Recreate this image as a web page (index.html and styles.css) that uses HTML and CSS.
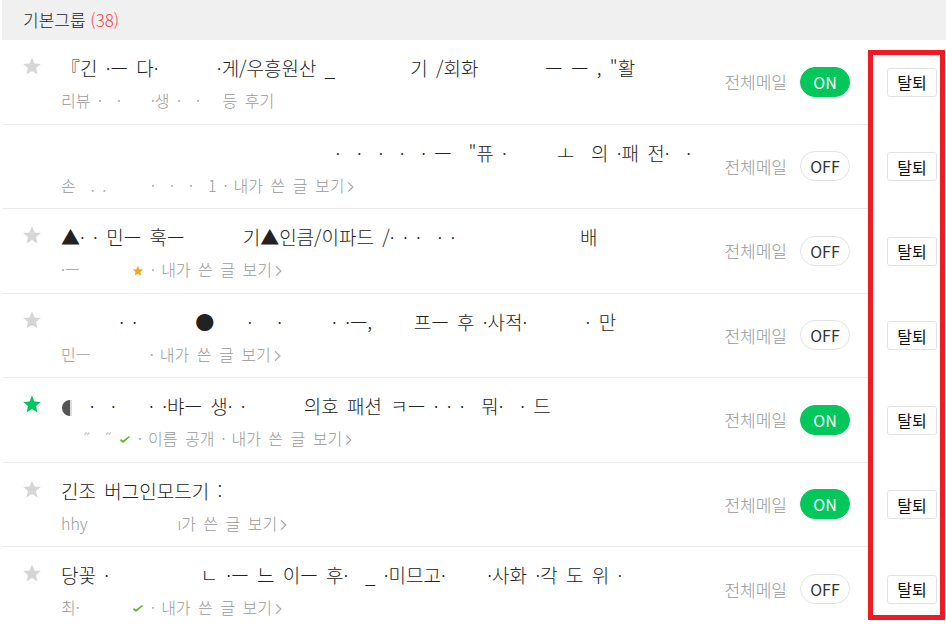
FILE: index.html
```html
<!DOCTYPE html>
<html lang="ko">

<head>
 <meta charset="UTF-8">
 <meta name="viewport" content="width=device-width, initial-scale=1.0">
 <title>가입 카페 관리</title>
 <link rel="stylesheet" href="styles.css">
</head>

<body>

 <section class="group">
  <h2 class="group-head">기본그룹 <em>(38)</em></h2>

  <ul class="cafe-list">
   <li class="cafe">
    <div class="cafe-main">
     <span class="fav"><svg viewBox="0 0 20 20"><path d="M10 1.5l2.5 5.9 6.4.5-4.9 4.2 1.5 6.3L10 15l-5.5 3.4 1.5-6.3-4.9-4.2 6.4-.5z"/></svg></span>
     <div class="cafe-info">
      <p class="cafe-name">『긴 ·ㅡ 다·       ·게/우흥원산 _         기 /회화        ㅡ ㅡ , "활</p>
      <p class="cafe-meta">리뷰 ·  ·    ·생 ·  ·   등 후기</p>
     </div>
     <span class="mail-label">전체메일</span>
     <button class="mail-toggle on">ON</button>
    </div>
    <div class="cafe-action"><button class="leave">탈퇴</button></div>
   </li>

   <li class="cafe">
    <div class="cafe-main">
     <span class="fav"></span>
     <div class="cafe-info">
      <p class="cafe-name">                                 ·  ·  ·  ·  · ㅡ  "퓨 ·      ㅗ  의 ·패 전·  ·</p>
      <p class="cafe-meta">손  . .      ·  ·  ·  1<span class="sep">·</span><a class="my-posts" href="#">내가 쓴 글 보기<svg viewBox="0 0 6 10"><path d="M1 1l4 4-4 4"/></svg></a></p>
     </div>
     <span class="mail-label">전체메일</span>
     <button class="mail-toggle">OFF</button>
    </div>
    <div class="cafe-action"><button class="leave">탈퇴</button></div>
   </li>

   <li class="cafe">
    <div class="cafe-main">
     <span class="fav"><svg viewBox="0 0 20 20"><path d="M10 1.5l2.5 5.9 6.4.5-4.9 4.2 1.5 6.3L10 15l-5.5 3.4 1.5-6.3-4.9-4.2 6.4-.5z"/></svg></span>
     <div class="cafe-info">
      <p class="cafe-name">▲· · 민ㅡ 훅ㅡ       기▲인큼/이파드 /· · ·  · ·               배</p>
      <p class="cafe-meta">·ㅡ       <svg class="badge" viewBox="0 0 12 12"><path fill="#f5a623" d="M6 .8l1.5 3.4 3.7.3-2.8 2.5.9 3.6L6 8.7 2.7 10.6l.9-3.6L.8 4.5l3.7-.3z"/></svg><span class="sep">·</span><a class="my-posts" href="#">내가 쓴 글 보기<svg viewBox="0 0 6 10"><path d="M1 1l4 4-4 4"/></svg></a></p>
     </div>
     <span class="mail-label">전체메일</span>
     <button class="mail-toggle">OFF</button>
    </div>
    <div class="cafe-action"><button class="leave">탈퇴</button></div>
   </li>

   <li class="cafe">
    <div class="cafe-main">
     <span class="fav"><svg viewBox="0 0 20 20"><path d="M10 1.5l2.5 5.9 6.4.5-4.9 4.2 1.5 6.3L10 15l-5.5 3.4 1.5-6.3-4.9-4.2 6.4-.5z"/></svg></span>
     <div class="cafe-info">
      <p class="cafe-name">       · ·       ●    ·   ·      · ·ㅡ,     프ㅡ 후 ·사적·       · 만</p>
      <p class="cafe-meta">민ㅡ       <span class="sep">·</span><a class="my-posts" href="#">내가 쓴 글 보기<svg viewBox="0 0 6 10"><path d="M1 1l4 4-4 4"/></svg></a></p>
     </div>
     <span class="mail-label">전체메일</span>
     <button class="mail-toggle">OFF</button>
    </div>
    <div class="cafe-action"><button class="leave">탈퇴</button></div>
   </li>

   <li class="cafe">
    <div class="cafe-main">
     <span class="fav is-on"><svg viewBox="0 0 20 20"><path d="M10 1.5l2.5 5.9 6.4.5-4.9 4.2 1.5 6.3L10 15l-5.5 3.4 1.5-6.3-4.9-4.2 6.4-.5z"/></svg></span>
     <div class="cafe-info">
      <p class="cafe-name"><svg class="moon" viewBox="0 0 12 18"><path d="M9 1a8 8 0 0 0 0 16z"/><path d="M9 1h2v16H9z" fill="#ddd"/></svg>  ·  ·    · ·뱌ㅡ 생· ·       의호 패션 ㅋㅡ · · ·  뭐·  · 드</p>
      <p class="cafe-meta">   ˝  ˝ <svg class="badge" viewBox="0 0 12 12"><path fill="#5bb82a" d="M1 6.5l3 2.5 7-6-1-1-6 4.5-2-1.5z"/></svg><span class="sep">·</span>이름 공개<span class="sep">·</span><a class="my-posts" href="#">내가 쓴 글 보기<svg viewBox="0 0 6 10"><path d="M1 1l4 4-4 4"/></svg></a></p>
     </div>
     <span class="mail-label">전체메일</span>
     <button class="mail-toggle on">ON</button>
    </div>
    <div class="cafe-action"><button class="leave">탈퇴</button></div>
   </li>

   <li class="cafe">
    <div class="cafe-main">
     <span class="fav"><svg viewBox="0 0 20 20"><path d="M10 1.5l2.5 5.9 6.4.5-4.9 4.2 1.5 6.3L10 15l-5.5 3.4 1.5-6.3-4.9-4.2 6.4-.5z"/></svg></span>
     <div class="cafe-info">
      <p class="cafe-name">긴조 버그인모드기 :</p>
      <p class="cafe-meta">hhy            <a class="my-posts" href="#">ı가 쓴 글 보기<svg viewBox="0 0 6 10"><path d="M1 1l4 4-4 4"/></svg></a></p>
     </div>
     <span class="mail-label">전체메일</span>
     <button class="mail-toggle on">ON</button>
    </div>
    <div class="cafe-action"><button class="leave">탈퇴</button></div>
   </li>

   <li class="cafe">
    <div class="cafe-main">
     <span class="fav"><svg viewBox="0 0 20 20"><path d="M10 1.5l2.5 5.9 6.4.5-4.9 4.2 1.5 6.3L10 15l-5.5 3.4 1.5-6.3-4.9-4.2 6.4-.5z"/></svg></span>
     <div class="cafe-info">
      <p class="cafe-name">당꽃 ·           ㄴ ·ㅡ 느 이ㅡ 후·  _ ·미므고·     ·사화 ·각 도 위 ·</p>
      <p class="cafe-meta">최·       <svg class="badge" viewBox="0 0 12 12"><path fill="#5bb82a" d="M1 6.5l3 2.5 7-6-1-1-6 4.5-2-1.5z"/></svg><span class="sep">·</span><a class="my-posts" href="#">내가 쓴 글 보기<svg viewBox="0 0 6 10"><path d="M1 1l4 4-4 4"/></svg></a></p>
     </div>
     <span class="mail-label">전체메일</span>
     <button class="mail-toggle">OFF</button>
    </div>
    <div class="cafe-action"><button class="leave">탈퇴</button></div>
   </li>
  </ul>

  <div class="mark"></div>
 </section>

</body>

</html>
```

FILE: styles.css
```css
*,
*::before,
*::after {
 box-sizing: border-box;
}

body {
 margin: 0;
 font-family: "Noto Sans CJK KR", "Noto Sans", sans-serif;
 font-weight: 300;
 color: #333;
 background: #fff;
}

.group {
 position: relative;
 margin-left: 2px;
}

.group-head {
 margin: 0;
 height: 40px;
 padding: 1px 0 0 21px;
 font-size: 17px;
 font-weight: 300;
 line-height: 38px;
 background: #f0f0f0;
 color: #222;
}

.group-head em {
 font-style: normal;
 color: #f5424b;
}

.cafe-list {
 margin: 0;
 padding: 0;
 list-style: none;
 border-bottom: 1px solid #ececec;
}

.cafe {
 display: flex;
 height: 84.5px;
}

.cafe:last-child .cafe-main {
 border-bottom: 0;
}

.cafe-main {
 flex: 1;
 display: flex;
 align-items: center;
 padding: 0 18px 0 20px;
 border-bottom: 1px solid #ececec;
}

.fav {
 align-self: flex-start;
 width: 20px;
 height: 20px;
 margin-top: 16px;
 flex: none;
}

.fav svg {
 display: block;
 width: 20px;
 height: 20px;
 fill: #d6d6d6;
}

.fav.is-on svg {
 fill: #03c75a;
}

.cafe-info {
 flex: 1;
 align-self: flex-start;
 padding: 17px 0 0 19px;
 overflow: hidden;
}

.cafe-info p {
 margin: 0;
 white-space: pre;
 line-height: 22px;
 word-spacing: 3px;
}

.cafe-name {
 font-size: 19px;
 color: #222;
}

.moon {
 width: 12px;
 height: 18px;
 vertical-align: -3px;
 fill: #555;
}

.cafe-meta {
 margin-top: 10px !important;
 font-size: 16px;
 color: #999;
}

.sep {
 margin: 0 6px 0 7px;
}

.badge {
 width: 12px;
 height: 12px;
 vertical-align: -1px;
}

.my-posts {
 color: inherit;
 text-decoration: none;
}

.my-posts svg {
 width: 7px;
 height: 12px;
 margin-left: 3px;
 vertical-align: -1px;
 fill: none;
 stroke: #aaa;
 stroke-width: 1.1;
}

.mail-label {
 font-size: 17px;
 color: #999;
 margin-right: 13px;
}

.mail-toggle {
 width: 50px;
 height: 30px;
 padding: 0;
 border: 1px solid #e3e3e3;
 border-radius: 15px;
 background: #fff;
 color: #333;
 font-family: inherit;
 font-weight: 400;
 font-size: 16px;
}

.mail-toggle.on {
 border-color: #03c75a;
 background: #03c75a;
 color: #fff;
}

.cafe-action {
 width: 78px;
 display: flex;
 align-items: center;
 padding-left: 19px;
}

.leave {
 width: 50px;
 height: 29px;
 padding: 0;
 border: 1px solid #e3e3e3;
 border-radius: 3px;
 background: #fff;
 color: #111;
 font-family: inherit;
 font-weight: 400;
 font-size: 16px;
}

/* annotation box around the leave buttons */
.mark {
 position: absolute;
 top: 50px;
 left: 866px;
 width: 77px;
 height: 570px;
 border: 5px solid #ed1c24;
 pointer-events: none;
}
```
